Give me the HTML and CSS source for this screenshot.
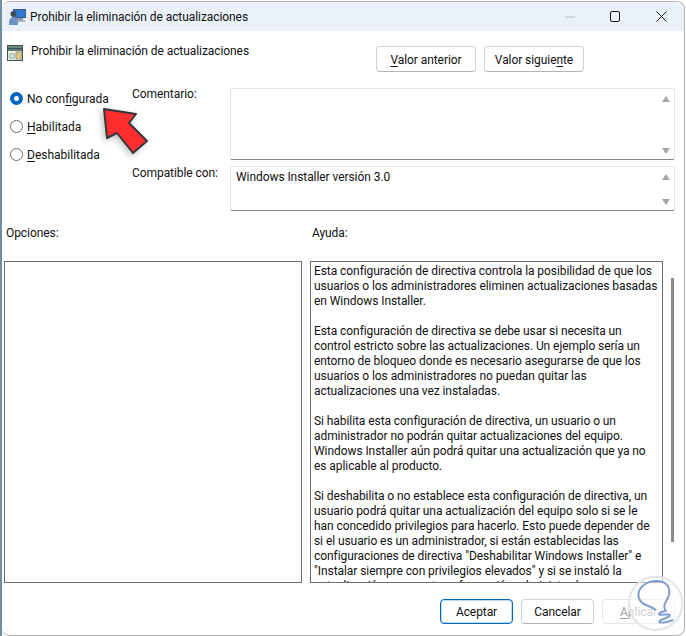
FILE: index.html
```html
<!DOCTYPE html>
<html lang="es">
<head>
<meta charset="utf-8">
<title>Prohibir la eliminación de actualizaciones</title>
<link rel="stylesheet" href="styles.css">
</head>
<body>
<div class="window">
  <header class="titlebar">
    <svg class="app-icon" width="17" height="17" viewBox="0 0 17 17">
      <rect x="4.500" y="1.500" width="12" height="8" fill="#2f78d8" stroke="#40587e"/>
      <rect x="7" y="10" width="7" height="2" fill="#8a97a8"/>
      <rect x="5" y="12" width="11" height="2" fill="#aab4c0"/>
      <circle cx="4.500" cy="6" r="3" fill="#3f4a5a"/>
      <path d="M0 15c0-4 2-6 4.500-6s4.500 2 4.500 6v2H0z" fill="#6f93c4"/>
    </svg>
    <span class="title-text">Prohibir la eliminación de actualizaciones</span>
    <div class="window-controls">
      <svg width="45" height="16" viewBox="0 0 45 16"><path d="M0 8h10" stroke="#b9bec4" fill="none"/></svg>
      <svg width="46" height="16" viewBox="0 0 46 16"><rect x="0.500" y="2.500" width="9" height="10" rx="1.500" stroke="#1a1a1a" fill="none"/></svg>
      <svg width="11" height="16" viewBox="0 0 11 16"><path d="M0.500 2.500l10 10M10.500 2.500l-10 10" stroke="#1a1a1a" fill="none"/></svg>
    </div>
  </header>

  <div class="heading-row">
    <svg class="policy-icon" width="16" height="16" viewBox="0 0 16 16">
      <rect x="0" y="0" width="16" height="16" fill="#3d5257"/>
      <rect x="1" y="1" width="14" height="2" fill="#6f8a82"/>
      <rect x="1" y="4" width="14" height="11" fill="#e9efe6"/>
      <rect x="1" y="4" width="14" height="2" fill="#5f7a72"/>
      <circle cx="5" cy="11" r="3.500" fill="#b9c9bd"/>
      <circle cx="5" cy="11" r="1" fill="#fff"/>
      <rect x="9" y="7" width="6" height="7" fill="#d8c98a" stroke="#6d6a4a" stroke-width=".5"/>
    </svg>
    <span class="heading-text">Prohibir la eliminación de actualizaciones</span>
    <div class="nav-buttons">
      <button class="btn nav-btn"><u>V</u>alor anterior</button>
      <button class="btn nav-btn">Valor siguie<u>n</u>te</button>
    </div>
  </div>

  <section class="settings">
    <div class="radios">
      <label class="radio"><span class="dot dot-on"></span><span class="radio-text">No con<u>f</u>igurada</span></label>
      <label class="radio"><span class="dot"></span><span class="radio-text"><u>H</u>abilitada</span></label>
      <label class="radio"><span class="dot"></span><span class="radio-text"><u>D</u>eshabilitada</span></label>
    </div>
    <div class="fields">
      <span class="field-label">Comentario:</span>
      <div class="field field-comment">
        <div class="scroll-arrows"><span class="arrow-up"></span><span class="arrow-down"></span></div>
      </div>
      <span class="field-label field-label-compat">Compatible con:</span>
      <div class="field field-compat">
        <span>Windows Installer versión 3.0</span>
        <div class="scroll-arrows"><span class="arrow-up"></span><span class="arrow-down"></span></div>
      </div>
    </div>
  </section>

  <div class="pane-labels">
    <span class="pane-label-left">Opciones:</span>
    <span>Ayuda:</span>
  </div>

  <section class="panes">
    <div class="pane pane-options"></div>
    <div class="pane pane-help">
      <p>Esta configuración de directiva controla la posibilidad de que los<br>usuarios o los administradores eliminen actualizaciones basadas<br>en Windows Installer.</p>
      <p>Esta configuración de directiva se debe usar si necesita un<br>control estricto sobre las actualizaciones. Un ejemplo sería un<br>entorno de bloqueo donde es necesario asegurarse de que los<br>usuarios o los administradores no puedan quitar las<br>actualizaciones una vez instaladas.</p>
      <p>Si habilita esta configuración de directiva, un usuario o un<br>administrador no podrán quitar actualizaciones del equipo.<br>Windows Installer aún podrá quitar una actualización que ya no<br>es aplicable al producto.</p>
      <p>Si deshabilita o no establece esta configuración de directiva, un<br>usuario podrá quitar una actualización del equipo solo si se le<br>han concedido privilegios para hacerlo. Esto puede depender de<br>si el usuario es un administrador, si están establecidas las<br>configuraciones de directiva "Deshabilitar Windows Installer" e<br>"Instalar siempre con privilegios elevados" y si se instaló la<br>actualización con una transformación administrada en un equipo</p>
    </div>
    <div class="help-scrollbar"><span class="thumb"></span></div>
  </section>

  <footer class="footer">
    <button class="btn foot-btn btn-default">Aceptar</button>
    <button class="btn foot-btn">Cancelar</button>
    <button class="btn foot-btn btn-disabled"><u>A</u>plicar</button>
  </footer>

  <svg class="red-arrow" width="50" height="52" viewBox="0 0 50 52">
    <path d="M2 2L34 7 27 16 45 34 31 46 15 26 5 31z" fill="#ff2d2d" stroke="#33373a" stroke-width="2" stroke-linejoin="round"/>
  </svg>
  <svg class="watermark" width="66" height="66" viewBox="0 0 198 198">
    <circle cx="107" cy="100" r="80" fill="#fff" fill-opacity=".5" stroke="#e2e6ea" stroke-width="6"/>
    <path d="M108 120C90 105 65 108 57 85 48 55 80 30 115 33c30 3 40 27 28 52-8 15-15 23-6 37-12 3-25 8-19 12 12 2 32-4 32 2-2 9-35 12-32 20 7 6 27-1 42-6" fill="none" stroke="#7f9fd0" stroke-width="6"/>
  </svg>
</div>
</body>
</html>
```
FILE: styles.css
```css
* { box-sizing: border-box; }
html, body { margin: 0; height: 100%; }
body { background: #fff; border-left: 2px solid #6f8ea3; overflow: hidden; font: 12px/15px Roboto, sans-serif; letter-spacing: -0.07px; color: #111; }
.window { position: relative; width: 683px; height: 635px; margin-top: 1px; background: #fff; border: 1px solid #b4b4b4; border-left: 0; border-radius: 8px; display: flex; flex-direction: column; overflow: hidden; }
u { text-underline-offset: 2px; }

.titlebar { height: 29px; flex: none; display: flex; align-items: center; padding: 0 17px 0 7px; background: #ebf1f8; }
.app-icon { margin-right: 4px; }
.title-text { flex: 1; padding-top: 2px; }
.window-controls { display: flex; align-items: center; }

.heading-row { display: flex; align-items: flex-start; padding: 14px 0 0 5px; height: 57px; flex: none; }
.policy-icon { margin-right: 8px; }
.heading-text { flex: 1; margin-top: -1px; }
.nav-buttons { display: flex; gap: 8px; margin-right: 100px; margin-top: 1px; }
.btn { font: inherit; letter-spacing: inherit; color: inherit; background: #fff; border: 1px solid #d0d0d0; border-bottom-color: #b4b4b4; border-radius: 4px; padding: 2px 0 0; }
.nav-btn { width: 100px; height: 26px; }

.settings { display: flex; flex: none; height: 123px; }
.radios { width: 130px; padding: 3px 0 0 8px; display: flex; flex-direction: column; gap: 13px; }
.radio { display: flex; align-items: center; gap: 4px; height: 15px; }
.radio-text { padding-top: 2px; letter-spacing: 0; }
.dot { width: 13px; height: 13px; border-radius: 50%; border: 1px solid #6b6b6b; background: #fff; }
.dot-on { border: 4px solid #0067c0; }
.fields { flex: 1; display: grid; grid-template-columns: 98px 445px; grid-template-rows: 72px 45px; row-gap: 6px; }
.field-label { line-height: 13px; }
.field-label-compat { line-height: 14px; }
.field { position: relative; border: 1px solid #e5e5e5; border-bottom-color: #868686; border-radius: 2px; padding: 3px 5px; }
.scroll-arrows { position: absolute; top: 7px; right: 4px; bottom: 5px; display: flex; flex-direction: column; justify-content: space-between; }
.arrow-up { border: 4px solid transparent; border-top: 0; border-bottom: 6px solid #a6a6a6; }
.arrow-down { border: 4px solid transparent; border-bottom: 0; border-top: 6px solid #a6a6a6; }

.pane-labels { flex: none; height: 50px; padding: 15px 0 0 4px; display: flex; }
.pane-label-left { width: 306px; }

.panes { flex: none; display: flex; height: 322px; padding-left: 2px; }
.pane { border: 1px solid #6d6d6d; height: 100%; }
.pane-options { width: 298px; margin-right: 8px; }
.pane-help { width: 353px; padding: 2px 3px 0; overflow: hidden; white-space: nowrap; }
.pane-help p { margin: 0 0 15px; }
.help-scrollbar { width: 3px; margin-left: 8px; padding-top: 17px; height: 100%; }
.thumb { display: block; height: 264px; width: 3px; background: #8a8a8a; }

.footer { flex: none; display: flex; gap: 8px; padding: 16px 0 0 438px; }
.foot-btn { width: 73px; height: 25px; }
.btn-default { border-color: #0067c0; box-shadow: inset 0 0 0 1px rgba(0,103,192,.25); }
.btn-disabled { color: #a0a0a0; border-color: #e5e5e5; }

.red-arrow { position: absolute; left: 100px; top: 105px; filter: drop-shadow(-2px 2px 3px rgba(0,0,0,.25)); }
.watermark { position: absolute; left: 618px; top: 568px; }
```
